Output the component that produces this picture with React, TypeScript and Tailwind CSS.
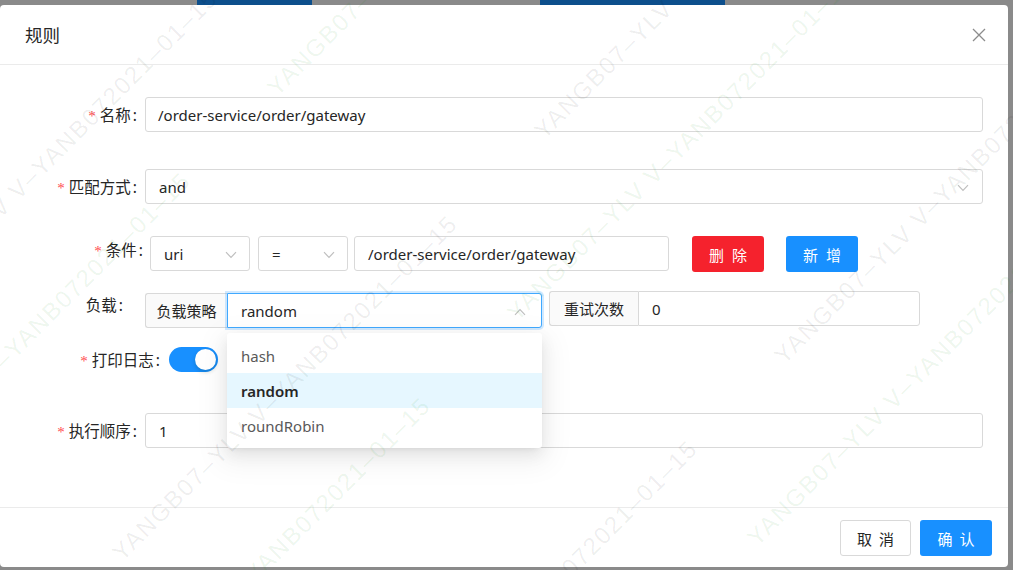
import React from 'react';

const WM_TEXT = 'YANGB07–YLV V–YANB072021–01–15';

type Mark = { x: number; y: number; green: boolean };

// watermark runs on 45° diagonals, in pairs of lines
const buildMarks = (): Mark[] => {
  const marks: Mark[] = [];
  for (let p = -1; p <= 3; p++) {
    for (let s = 0; s <= 1; s++) {
      const c = 225 + 465 * p + 155 * s;
      for (let n = -3; n <= 3; n++) {
        const xe = 225 + 240 * p - 27 * s + 422 * n;
        const ye = c - xe;
        const x = xe - 340;
        const y = ye + 340;
        if (xe < -40 || x > 1050 || ye > 640 || y < -40) continue;
        marks.push({ x, y, green: s === 1 });
      }
    }
  }
  return marks;
};

const marks = buildMarks();

const Chevron = ({ up = false }: { up?: boolean }) => (
  <svg width="12" height="8" viewBox="0 0 12 8" className="shrink-0">
    <path
      d={up ? 'M1 6.8L6 1.6L11 6.8' : 'M1 1.2L6 6.4L11 1.2'}
      fill="none"
      stroke="#bfbfbf"
      strokeWidth="1.2"
    />
  </svg>
);

const Req = () => (
  <span className="mr-[4px] text-[15px] leading-none text-[#ff4d4f] font-['Liberation_Serif',serif]">*</span>
);

const Label = ({ text, required, className }: { text: string; required?: boolean; className: string }) => (
  <div className={`flex shrink-0 items-center justify-end pt-[3px] text-[15.5px] text-[#262626] ${className}`}>
    {required && <Req />}
    <span>{text}</span>
    <span className="ml-[2px]">:</span>
  </div>
);

const Input = ({ value, className }: { value: string; className: string }) => (
  <div className={`flex h-[35px] items-center rounded-[3px] border border-[#d9d9d9] bg-white pl-[12px] pt-[2px] text-[15px] text-[#262626] ${className}`}>
    {value}
  </div>
);

const Select = ({ value, className }: { value: string; className: string }) => (
  <div className={`flex h-[35px] items-center justify-between rounded-[3px] border border-[#d9d9d9] bg-white pl-[13px] pr-[12px] pt-[2px] text-[15px] text-[#262626] ${className}`}>
    <span>{value}</span>
    <Chevron />
  </div>
);

const App: React.FC = () => {
  return (
    <div className="relative h-[570px] w-[1013px] overflow-hidden bg-[#8a8a8a] font-['Noto_Sans','Noto_Sans_CJK_SC',sans-serif]">
      {/* page behind the overlay */}
      <div className="flex h-[5px]">
        <div className="ml-[197px] w-[115px] bg-[#0d4f8c]" />
        <div className="ml-[228px] w-[185px] bg-[#0d4f8c]" />
      </div>

      <div className="flex h-[562px] w-[1008px] flex-col rounded-[4px] bg-white">
        {/* header */}
        <div className="flex h-[60px] shrink-0 items-center justify-between border-b border-[#ebebeb] pl-[25px] pr-[22px]">
          <span className="pt-[2px] text-[17.5px] text-[#262626]">规则</span>
          <svg width="14" height="14" viewBox="0 0 14 14">
            <path d="M1 1L13 13M13 1L1 13" stroke="#8c8c8c" strokeWidth="1.3" />
          </svg>
        </div>

        {/* body */}
        <div className="flex flex-1 flex-col pr-[25px] pt-[32px]">
          <div className="flex">
            <Label text="名称" required className="h-[35px] w-[145px] pr-[8px]" />
            <Input value="/order-service/order/gateway" className="flex-1" />
          </div>

          <div className="mt-[37px] flex">
            <Label text="匹配方式" required className="h-[35px] w-[145px] pr-[8px]" />
            <Select value="and" className="flex-1 pr-[13px]" />
          </div>

          <div className="mt-[32px] flex items-start">
            <Label text="条件" required className="h-[27px] w-[150px] pr-[7px]" />
            <Select value="uri" className="w-[100px]" />
            <Select value="=" className="ml-[8px] w-[90px]" />
            <Input value="/order-service/order/gateway" className="ml-[6px] w-[315px] pl-[13px]" />
            <button className="ml-[23px] flex h-[36px] w-[72px] items-center justify-center rounded-[3px] bg-[#f5222d] pt-[2px] text-[15px] text-white">
              <span className="-mr-[8px] tracking-[8px]">删除</span>
            </button>
            <button className="ml-[22px] flex h-[36px] w-[72px] items-center justify-center rounded-[3px] bg-[#1890ff] pt-[2px] text-[15px] text-white">
              <span className="-mr-[8px] tracking-[8px]">新增</span>
            </button>
          </div>

          <div className="mt-[19px] flex items-start">
            <Label text="负载" className="h-[27px] w-[145px] pr-[22px]" />
            <div className="mt-[2px] flex">
              <div className="flex h-[35px] w-[82px] items-center justify-center rounded-l-[3px] border border-r-0 border-[#d9d9d9] bg-[#fafafa] pt-[2px] text-[15px] text-[#262626]">
                负载策略
              </div>
              <div className="relative">
                <div className="flex h-[35px] w-[315px] items-center justify-between rounded-r-[3px] border border-[#40a9ff] bg-white pl-[13px] pr-[15px] pt-[2px] text-[15px] text-[#262626] shadow-[0_0_0_2px_rgba(24,144,255,0.2)]">
                  <span>random</span>
                  <Chevron up />
                </div>
                <div className="absolute left-0 top-[40px] z-10 w-[315px] rounded-[3px] bg-white py-[5px] text-[15px] shadow-[0_3px_6px_-4px_rgba(0,0,0,0.12),0_6px_16px_0_rgba(0,0,0,0.08),0_9px_28px_8px_rgba(0,0,0,0.05)]">
                  <div className="flex h-[35px] items-center pl-[14px] pt-[2px] text-[#595959]">hash</div>
                  <div className="flex h-[35px] items-center bg-[#e6f7ff] pl-[14px] pt-[2px] font-semibold text-[#262626]">random</div>
                  <div className="flex h-[35px] items-center pl-[14px] pt-[2px] text-[#595959]">roundRobin</div>
                </div>
              </div>
            </div>
            <div className="ml-[7px] flex">
              <div className="flex h-[35px] w-[89px] items-center justify-center rounded-l-[3px] border border-r-0 border-[#d9d9d9] bg-[#fafafa] pt-[2px] text-[15px] text-[#262626]">
                重试次数
              </div>
              <Input value="0" className="w-[282px] rounded-l-none pl-[13px]" />
            </div>
          </div>

          <div className="mt-[19px] flex items-center">
            <Label text="打印日志" required className="h-[25px] w-[169px] pr-[9px]" />
            <div className="flex h-[25px] w-[49px] items-center justify-end rounded-full bg-[#1890ff] px-[2px]">
              <div className="h-[21px] w-[21px] rounded-full bg-white shadow-[0_2px_4px_rgba(0,35,11,0.2)]" />
            </div>
          </div>

          <div className="mt-[41px] flex">
            <Label text="执行顺序" required className="h-[35px] w-[145px] pr-[8px]" />
            <Input value="1" className="flex-1 pl-[13px]" />
          </div>
        </div>

        {/* footer */}
        <div className="flex h-[60px] shrink-0 items-start justify-end gap-[9px] border-t border-[#ebebeb] pr-[16px] pt-[12px]">
          <button className="flex h-[36px] w-[71px] items-center justify-center rounded-[3px] border border-[#d9d9d9] bg-white pt-[2px] text-[15px] text-[#262626]">
            <span className="-mr-[7px] tracking-[7px]">取消</span>
          </button>
          <button className="flex h-[36px] w-[72px] items-center justify-center rounded-[3px] bg-[#1890ff] pt-[2px] text-[15px] text-white">
            <span className="-mr-[7px] tracking-[7px]">确认</span>
          </button>
        </div>
      </div>

      {/* watermark */}
      <div className="pointer-events-none absolute inset-0 z-50 overflow-hidden">
        {marks.map((m, i) => (
          <span
            key={i}
            className={`absolute origin-bottom-left -rotate-45 whitespace-nowrap text-[24px] leading-[24px] tracking-[1.7px] font-['Liberation_Sans',sans-serif] ${m.green ? 'text-[rgba(0,140,0,0.08)]' : 'text-[rgba(0,0,0,0.07)]'}`}
            style={{ left: m.x, top: m.y - 24 }}
          >
            {WM_TEXT}
          </span>
        ))}
      </div>
    </div>
  );
};

export default App;
